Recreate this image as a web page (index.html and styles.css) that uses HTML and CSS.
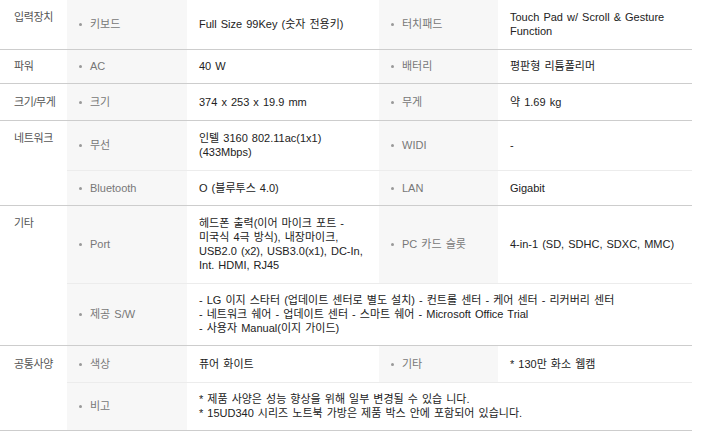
FILE: index.html
```html
<!DOCTYPE html>
<html lang="ko">
<head>
<meta charset="utf-8">
<link rel="stylesheet" href="styles.css">
</head>
<body>
<table class="spec">
  <colgroup>
    <col class="c-group"><col class="c-label"><col class="c-value"><col class="c-label2"><col class="c-value2">
  </colgroup>
  <tbody>
    <tr class="main loose">
      <th class="group">입력장치</th>
      <td class="label">키보드</td>
      <td class="value">Full Size 99Key (숫자 전용키)</td>
      <td class="label">터치패드</td>
      <td class="value">Touch Pad w/ Scroll &amp; Gesture<br>Function</td>
    </tr>
    <tr class="main tight">
      <th class="group">파워</th>
      <td class="label">AC</td>
      <td class="value">40 W</td>
      <td class="label">배터리</td>
      <td class="value">평판형 리튬폴리머</td>
    </tr>
    <tr class="main tall">
      <th class="group">크기/무게</th>
      <td class="label">크기</td>
      <td class="value">374 x 253 x 19.9 mm</td>
      <td class="label">무게</td>
      <td class="value">약 1.69 kg</td>
    </tr>
    <tr class="sub loose">
      <th class="group" rowspan="2">네트워크</th>
      <td class="label">무선</td>
      <td class="value">인텔 3160 802.11ac(1x1)<br>(433Mbps)</td>
      <td class="label">WIDI</td>
      <td class="value">-</td>
    </tr>
    <tr class="main">
      <td class="label">Bluetooth</td>
      <td class="value">O (블루투스 4.0)</td>
      <td class="label">LAN</td>
      <td class="value">Gigabit</td>
    </tr>
    <tr class="sub loose">
      <th class="group" rowspan="2">기타</th>
      <td class="label">Port</td>
      <td class="value">헤드폰 출력(이어 마이크 포트 -<br>미국식 4극 방식), 내장마이크,<br>USB2.0 (x2), USB3.0(x1), DC-In,<br>Int. HDMI, RJ45</td>
      <td class="label">PC 카드 슬롯</td>
      <td class="value">4-in-1 (SD, SDHC, SDXC, MMC)</td>
    </tr>
    <tr class="main tight">
      <td class="label">제공 S/W</td>
      <td class="value" colspan="3">- LG 이지 스타터 (업데이트 센터로 별도 설치) - 컨트롤 센터 - 케어 센터 - 리커버리 센터<br>- 네트워크 쉐어 - 업데이트 센터 - 스마트 쉐어 - Microsoft Office Trial<br>- 사용자 Manual(이지 가이드)</td>
    </tr>
    <tr class="sub tall">
      <th class="group" rowspan="2">공통사양</th>
      <td class="label">색상</td>
      <td class="value">퓨어 화이트</td>
      <td class="label">기타</td>
      <td class="value">* 130만 화소 웹캠</td>
    </tr>
    <tr class="main tight">
      <td class="label">비고</td>
      <td class="value" colspan="3">* 제품 사양은 성능 향상을 위해 일부 변경될 수 있습 니다.<br>* 15UD340 시리즈 노트북 가방은 제품 박스 안에 포함되어 있습니다.</td>
    </tr>
  </tbody>
</table>
</body>
</html>
```
FILE: styles.css
```css
html, body {
  margin: 0;
  padding: 0;
  background: #fff;
}
body {
  font-family: "Liberation Sans", "Noto Sans CJK KR", sans-serif;
  font-size: 11px;
  line-height: 14px;
  word-spacing: 1px;
  color: #333;
}
.spec {
  width: 692px;
  border-collapse: collapse;
  table-layout: fixed;
}
.c-group { width: 67px; }
.c-label { width: 120px; }
.c-value { width: 192px; }
.c-label2 { width: 119px; }
.c-value2 { width: 194px; }
.spec th, .spec td {
  padding: 10px 12px;
  text-align: left;
  font-weight: normal;
}
.spec tr.loose > * { padding-bottom: 11px; }
.spec tr.tight > * { padding-top: 9px; }
.spec tr.tall > * { padding-top: 11px; padding-bottom: 11px; }
.spec tr.main > * { border-bottom: 1px solid #cdcdcd; }
.spec tr.sub > * { border-bottom: 1px solid #ececec; }
.spec tr.sub > .group { border-bottom: 1px solid #cdcdcd; }
.spec .group {
  vertical-align: top;
  color: #555;
  padding-left: 14px;
  padding-right: 0;
  white-space: nowrap;
  letter-spacing: -0.4px;
  word-spacing: 0;
}
.label {
  background: #f7f7f7;
  color: #777;
  vertical-align: middle;
  padding-left: 13px;
}
.label::before {
  content: "";
  display: inline-block;
  width: 3px;
  height: 3px;
  border-radius: 50%;
  background: #999;
  margin-right: 8px;
  vertical-align: middle;
  position: relative;
  top: -1px;
}
.value {
  vertical-align: middle;
  color: #222;
}
```
